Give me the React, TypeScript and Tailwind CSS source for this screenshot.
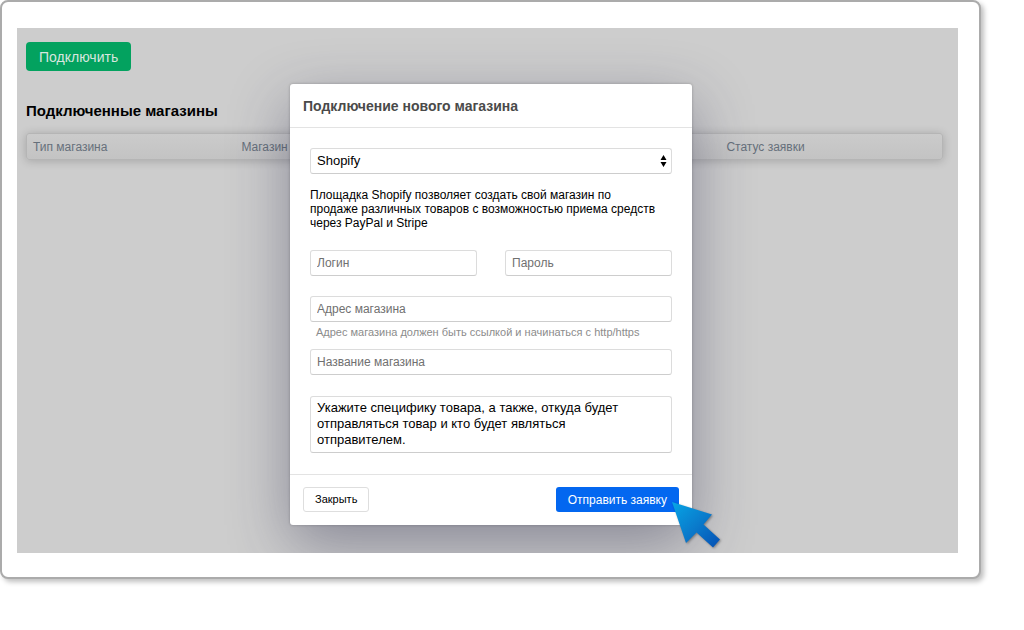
import React, { FormEvent, useRef } from "react";

type StoreProps = {
  platform: string;
  login: string;
  password: string;
  address: string;
  name: string;
  details: string;
};

const fieldClass =
  "block w-full rounded-[3px] border border-[#dcdcdc] border-b-[#cdcdcd] bg-white px-[6px] leading-4 text-black outline-none placeholder:text-[#707070]";

const StoresTable = () => {
  return (
    <div className="rounded-[3px] border border-[#b5b5b5] bg-linear-to-b from-[#cbcbcb] to-[#c3c3c3] shadow-[0_1px_10px_rgba(0,0,0,0.2)]">
      <table className="w-full table-fixed text-left text-xs text-[#66707b]">
        <thead>
          <tr className="h-[25px]">
            <th className="w-[23%] px-[6px] font-normal">Тип магазина</th>
            <th className="w-[53%] px-1 font-normal">Магазин</th>
            <th className="px-1 font-normal">Статус заявки</th>
          </tr>
        </thead>
      </table>
    </div>
  );
};

const Cursor = () => {
  return (
    <svg
      className="pointer-events-none absolute -right-[29px] -bottom-6 drop-shadow-[1px_1px_1px_rgba(0,0,0,0.35)]"
      width="50"
      height="48"
      viewBox="0 0 50 48"
      aria-hidden="true"
    >
      <defs>
        <linearGradient id="cursor" x1="0" y1="0" x2="1" y2="1">
          <stop offset="0" stopColor="#06a5e6" />
          <stop offset="0.5" stopColor="#0a7ccc" />
          <stop offset="1" stopColor="#0550b4" />
        </linearGradient>
      </defs>
      <path
        d="M1 1 L41 13.5 L32.5 23.5 L49 38.5 L42 46.5 L25.5 31.5 L15 42 Z"
        fill="url(#cursor)"
      />
    </svg>
  );
};

const NewStoreForm = () => {
  const formProps = useRef<StoreProps>({
    platform: "shopify",
    login: "",
    password: "",
    address: "",
    name: "",
    details: "",
  });

  const sendRequest = (e: FormEvent) => {
    e.preventDefault();
    console.log(formProps.current);
  };

  return (
    <form
      role="dialog"
      aria-labelledby="new-store-title"
      className="relative w-full max-w-[402px] rounded-[3px] bg-white shadow-[0_20px_60px_rgba(40,40,75,0.42),0_0_3px_rgba(0,0,0,0.25)]"
      onSubmit={sendRequest}
    >
      <div className="flex h-11 items-center border-b border-[#e3e3e3] px-[13px]">
        <h2
          id="new-store-title"
          className="text-sm font-bold text-[#4a4a4a]"
        >
          Подключение нового магазина
        </h2>
      </div>
      <div className="pt-5 pr-5 pb-[21px] pl-5">
        <div className="relative">
          <select
            aria-label="Площадка"
            className={`${fieldClass} h-[26px] appearance-none text-[13px]`}
            defaultValue="shopify"
            onChange={(e) => (formProps.current.platform = e.target.value)}
          >
            <option value="shopify">Shopify</option>
          </select>
          <svg
            className="pointer-events-none absolute top-[7px] right-[5px]"
            width="7"
            height="12"
            viewBox="0 0 7 12"
            aria-hidden="true"
          >
            <path d="M3.5 0 L6.5 5 H0.5 Z M3.5 12 L6.5 7 H0.5 Z" />
          </svg>
        </div>
        <p className="mt-[14px] text-xs leading-[14px] whitespace-nowrap text-black">
          Площадка Shopify позволяет создать свой магазин по
          <br />
          продаже различных товаров с возможностью приема средств
          <br />
          через PayPal и Stripe
        </p>
        <div className="mt-5 grid grid-cols-2 gap-7">
          <input
            type="text"
            aria-label="Логин"
            placeholder="Логин"
            className={`${fieldClass} h-[26px] text-xs`}
            onChange={(e) => (formProps.current.login = e.target.value)}
          />
          <input
            type="password"
            aria-label="Пароль"
            placeholder="Пароль"
            className={`${fieldClass} h-[26px] text-xs`}
            onChange={(e) => (formProps.current.password = e.target.value)}
          />
        </div>
        <input
          type="text"
          aria-label="Адрес магазина"
          aria-describedby="address-hint"
          placeholder="Адрес магазина"
          className={`${fieldClass} mt-5 h-[26px] text-xs`}
          onChange={(e) => (formProps.current.address = e.target.value)}
        />
        <p
          id="address-hint"
          className="mt-[2px] pl-[6px] text-[11px] leading-4 whitespace-nowrap text-[#8c8c8c]"
        >
          Адрес магазина должен быть ссылкой и начинаться с http/https
        </p>
        <input
          type="text"
          aria-label="Название магазина"
          placeholder="Название магазина"
          className={`${fieldClass} mt-[9px] h-[26px] text-xs`}
          onChange={(e) => (formProps.current.name = e.target.value)}
        />
        <textarea
          aria-label="Специфика товара"
          rows={3}
          className={`${fieldClass} mt-[21px] h-[57px] resize-none overflow-hidden py-[3px] text-[13px]`}
          defaultValue={
            "Укажите специфику товара, а также, откуда будет\nотправляться товар и кто будет являться\nотправителем."
          }
          onChange={(e) => (formProps.current.details = e.target.value)}
        />
      </div>
      <div className="flex items-center justify-between border-t border-[#e3e3e3] px-[13px] pt-3 pb-[13px]">
        <button
          type="button"
          className="h-[25px] rounded-[3px] border border-[#dedede] bg-white px-[11px] text-[11px] text-black"
        >
          Закрыть
        </button>
        <button
          type="submit"
          className="h-[25px] rounded-[3px] bg-[#0367f0] px-3 text-xs text-white"
        >
          Отправить заявку
        </button>
      </div>
      <Cursor />
    </form>
  );
};

const App = () => {
  return (
    <div className="bg-white pr-[43px] pb-[51px] font-['Liberation_Sans',Arial,sans-serif]">
      <div className="rounded-lg border-2 border-[#ababab] bg-white pt-[26px] pr-[21px] pb-6 pl-[15px] shadow-[3px_3px_5px_rgba(0,0,0,0.25)]">
        <div className="grid overflow-hidden bg-[#cdcdcd]">
          <main className="col-start-1 row-start-1 pt-[14px] pr-[15px] pl-[9px]">
            <button
              type="button"
              className="h-[29px] rounded-[4px] bg-[#03a25f] px-[13px] text-sm text-[#d8e6df]"
            >
              Подключить
            </button>
            <h1 className="mt-[30px] mb-3 text-[15px] leading-5 font-bold text-black">
              Подключенные магазины
            </h1>
            <StoresTable />
          </main>
          <div className="col-start-1 row-start-1 flex items-start justify-center pt-14 pb-7 pl-[7px]">
            <NewStoreForm />
          </div>
        </div>
      </div>
    </div>
  );
};

export default App;
